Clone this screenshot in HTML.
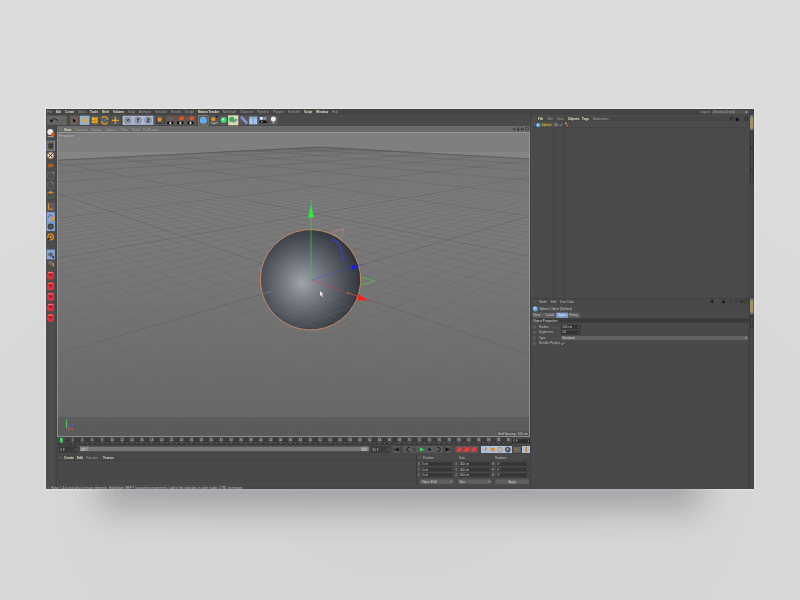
<!DOCTYPE html>
<html><head><meta charset="utf-8"><style>
html,body{margin:0;padding:0;width:800px;height:600px;overflow:hidden;background:#dcdcdc}
#bgv{position:absolute;left:0;top:0;width:800px;height:600px;background:radial-gradient(ellipse 640px 400px at 400px 500px,rgba(0,0,0,0.04) 0%,rgba(0,0,0,0.025) 60%,rgba(0,0,0,0) 100%)}
svg{position:absolute;left:0;top:0;will-change:transform}
text{font-family:"Liberation Sans",sans-serif}
#sh2{position:absolute;left:46px;top:109px;width:708px;height:380px;box-shadow:0 0 2px 1px rgba(255,255,255,0.35)}
#sh{position:absolute;left:105px;top:419px;width:590px;height:70px;background:#3b3b3b;box-shadow:0 14px 34px 6px rgba(40,44,56,0.30)}
</style></head><body>
<div id="bgv"></div><div id="sh2"></div><div id="sh"></div>
<svg width="800" height="600" viewBox="0 0 800 600">
<rect x="46" y="109" width="708" height="380" fill="#474747" />
<rect x="46" y="109" width="708" height="5.4" fill="#444444" />
<text x="47" y="113.4" font-size="3.5" fill="#a0a0a0" font-weight="normal" textLength="5.2" lengthAdjust="spacingAndGlyphs" stroke-width="0">File</text>
<text x="56" y="113.4" font-size="3.5" fill="#e4e3c6" font-weight="bold" textLength="5.2" lengthAdjust="spacingAndGlyphs" stroke-width="0">Edit</text>
<text x="65" y="113.4" font-size="3.5" fill="#e4e3c6" font-weight="bold" textLength="9.2" lengthAdjust="spacingAndGlyphs" stroke-width="0">Create</text>
<text x="78" y="113.4" font-size="3.5" fill="#a0a0a0" font-weight="normal" textLength="8.2" lengthAdjust="spacingAndGlyphs" stroke-width="0">Select</text>
<text x="90" y="113.4" font-size="3.5" fill="#e4e3c6" font-weight="bold" textLength="8.2" lengthAdjust="spacingAndGlyphs" stroke-width="0">Tools</text>
<text x="102" y="113.4" font-size="3.5" fill="#e4e3c6" font-weight="bold" textLength="7.2" lengthAdjust="spacingAndGlyphs" stroke-width="0">Mesh</text>
<text x="113" y="113.4" font-size="3.5" fill="#e4e3c6" font-weight="bold" textLength="11.2" lengthAdjust="spacingAndGlyphs" stroke-width="0">Volume</text>
<text x="128" y="113.4" font-size="3.5" fill="#a0a0a0" font-weight="normal" textLength="7.2" lengthAdjust="spacingAndGlyphs" stroke-width="0">Snap</text>
<text x="139" y="113.4" font-size="3.5" fill="#a0a0a0" font-weight="normal" textLength="12.2" lengthAdjust="spacingAndGlyphs" stroke-width="0">Animate</text>
<text x="155" y="113.4" font-size="3.5" fill="#a0a0a0" font-weight="normal" textLength="12.2" lengthAdjust="spacingAndGlyphs" stroke-width="0">Simulate</text>
<text x="171" y="113.4" font-size="3.5" fill="#a0a0a0" font-weight="normal" textLength="10.2" lengthAdjust="spacingAndGlyphs" stroke-width="0">Render</text>
<text x="185" y="113.4" font-size="3.5" fill="#a0a0a0" font-weight="normal" textLength="9.2" lengthAdjust="spacingAndGlyphs" stroke-width="0">Sculpt</text>
<text x="198" y="113.4" font-size="3.5" fill="#e4e3c6" font-weight="bold" textLength="21.2" lengthAdjust="spacingAndGlyphs" stroke-width="0">Motion Tracker</text>
<text x="223" y="113.4" font-size="3.5" fill="#a0a0a0" font-weight="normal" textLength="13.2" lengthAdjust="spacingAndGlyphs" stroke-width="0">MoGraph</text>
<text x="240" y="113.4" font-size="3.5" fill="#a0a0a0" font-weight="normal" textLength="13.2" lengthAdjust="spacingAndGlyphs" stroke-width="0">Character</text>
<text x="257" y="113.4" font-size="3.5" fill="#a0a0a0" font-weight="normal" textLength="12.2" lengthAdjust="spacingAndGlyphs" stroke-width="0">Pipeline</text>
<text x="273" y="113.4" font-size="3.5" fill="#a0a0a0" font-weight="normal" textLength="11.2" lengthAdjust="spacingAndGlyphs" stroke-width="0">Plugins</text>
<text x="288" y="113.4" font-size="3.5" fill="#a0a0a0" font-weight="normal" textLength="12.2" lengthAdjust="spacingAndGlyphs" stroke-width="0">Redshift</text>
<text x="304" y="113.4" font-size="3.5" fill="#e4e3c6" font-weight="bold" textLength="8.2" lengthAdjust="spacingAndGlyphs" stroke-width="0">Script</text>
<text x="316" y="113.4" font-size="3.5" fill="#e4e3c6" font-weight="bold" textLength="12.2" lengthAdjust="spacingAndGlyphs" stroke-width="0">Window</text>
<text x="332" y="113.4" font-size="3.5" fill="#a0a0a0" font-weight="normal" textLength="6.0" lengthAdjust="spacingAndGlyphs" stroke-width="0">Help</text>
<text x="700" y="113.4" font-size="3.2" fill="#a8a8a8" font-weight="normal" >Layout:</text>
<rect x="712" y="110.4" width="37" height="3.8" fill="#545454" />
<text x="713" y="113.4" font-size="3.2" fill="#a0a0a0" font-weight="normal" >[Startup (User)]</text>
<path d="M745 111.6h2.4l-1.2 1.3z" fill="#ddd" stroke="none" stroke-width="0.6" />
<rect x="46" y="114.5" width="484" height="11.5" fill="#4a4a4a" />
<rect x="47" y="115.7" width="19.6" height="9.2" fill="#666666" />
<path d="M49.8 122.2l1.2-3.2l2.2 2.2z" fill="#0a0a0a" stroke="none" stroke-width="0.6" />
<path d="M51.8 120.3q2.6-3.2 5.2-0.6q0.6 0.8 0 1.6" fill="none" stroke="#101010" stroke-width="0.75" />
<path d="M59.5 121.2q2.2-2.8 4.6-0.8" fill="none" stroke="#5c5c5c" stroke-width="0.6" />
<path d="M63.6 119.2l1.2 2.4l-2.2 0.2z" fill="#5c5c5c" stroke="none" stroke-width="0.6" />
<rect x="70" y="115.7" width="8.6" height="9.2" fill="#5e5e5e" />
<circle cx="74.3" cy="120.3" r="3.0" fill="none" stroke="#b0513a" stroke-width="1.1" stroke-dasharray="1.3 0.5"/>
<path d="M73.2 118.6l2.8 2.5h-1.2l0.7 1.2l-0.7 0.3l-0.7-1.2l-0.9 0.9z" fill="#0a0a0a" stroke="none" stroke-width="0.6" />
<rect x="79.7" y="115.7" width="9.8" height="9.2" fill="#8db1e4" />
<path d="M84.6 116.9v6.8M81.2 120.3h6.8" fill="none" stroke="#e3a31e" stroke-width="1.1" />
<path d="M84.6 116.5l-1.3 1.6h2.6zM84.6 124.1l-1.3-1.6h2.6zM80.8 120.3l1.6-1.3v2.6zM88.4 120.3l-1.6-1.3v2.6z" fill="#e3a31e" stroke="none" stroke-width="0.6" />
<circle cx="84.6" cy="120.3" r="1.1" fill="#eaa621" stroke="none" stroke-width="0.6" />
<rect x="90.5" y="115.7" width="8.4" height="9.2" fill="#5a5a5a" />
<rect x="91.9" y="117.3" width="5.8" height="6" fill="#eba51c" />
<path d="M91.9 120.3h5.8M94.8 117.3v6" fill="none" stroke="#9a6410" stroke-width="0.45" />
<rect x="92.6" y="118" width="1.6" height="1.6" fill="#f7c860" />
<rect x="100" y="115.7" width="9.5" height="9.2" fill="#5a5a5a" />
<path d="M102 118.2a3 3 0 0 1 5.4 0.4M107.5 122.3a3 3 0 0 1 -5.6 0" fill="none" stroke="#e3a01c" stroke-width="1.2" />
<path d="M107.8 117.5l0.3 2.4l-2-0.9z M101.6 123.1l-0.3-2.4l2 0.9z" fill="#e3a01c" stroke="none" stroke-width="0.6" />
<circle cx="104.7" cy="120.3" r="1.0" fill="#5077b8" stroke="none" stroke-width="0.6" />
<rect x="110.6" y="115.7" width="9.5" height="9.2" fill="#565656" />
<path d="M115.3 116.8v7M111.8 120.3h7" fill="none" stroke="#eba51c" stroke-width="1.2" />
<rect x="122.6" y="115.7" width="30.8" height="9.2" fill="#a4bbdb" />
<circle cx="127.8" cy="120.3" r="3.4" fill="#8fa1c0" stroke="#a9806e" stroke-width="0.9" />
<path d="M126.39999999999999 118.9l2.8 2.8M129.2 118.9l-2.8 2.8" fill="none" stroke="#1a2030" stroke-width="0.9" />
<circle cx="138.0" cy="120.3" r="3.4" fill="#8fa1c0" stroke="#a9806e" stroke-width="0.9" />
<path d="M136.4 118.6h3.2l-1.6 2.2z" fill="#25314a" stroke="none" stroke-width="0.6" />
<path d="M138.0 120.4v1.8" fill="none" stroke="#1b2130" stroke-width="0.9" />
<circle cx="148.2" cy="120.3" r="3.4" fill="#8fa1c0" stroke="#a9806e" stroke-width="0.9" />
<path d="M146.89999999999998 118.9h2.6l-2.6 2.8h2.6" fill="none" stroke="#0d0d0d" stroke-width="0.8" />
<rect x="154" y="115.7" width="8.8" height="9.2" fill="#5a5a5a" />
<path d="M156.2 117.2v6.2h5.6" fill="none" stroke="#2a2a2a" stroke-width="0.8" />
<circle cx="159.6" cy="119.4" r="2.0" fill="#f29022" stroke="none" stroke-width="0.6" />
<path d="M158.5 123.4l1.2-1.2" fill="none" stroke="#333" stroke-width="0.5" />
<rect x="165.4" y="115.7" width="30.4" height="9.2" fill="#5a5a5a" />
<rect x="166.9" y="116.3" width="7.4" height="5.2" fill="#5e5e5e" stroke="#7a4638" stroke-width="0.7"/>
<circle cx="168.4" cy="122.9" r="1.3" fill="#050505" stroke="none" stroke-width="0.6" />
<circle cx="172.2" cy="122.9" r="1.3" fill="#050505" stroke="none" stroke-width="0.6" />
<circle cx="170.29999999999998" cy="122.9" r="1.0" fill="#f0f0f0" stroke="none" stroke-width="0.6" />
<rect x="177.0" y="116.3" width="7.4" height="5.2" fill="#5e5e5e" stroke="#7a4638" stroke-width="0.7"/>
<rect x="179.89999999999998" y="116.6" width="3.6" height="3.2" fill="#e8582a" />
<circle cx="178.5" cy="122.9" r="1.3" fill="#050505" stroke="none" stroke-width="0.6" />
<circle cx="182.29999999999998" cy="122.9" r="1.3" fill="#050505" stroke="none" stroke-width="0.6" />
<circle cx="180.39999999999998" cy="122.9" r="1.0" fill="#f0f0f0" stroke="none" stroke-width="0.6" />
<rect x="187.1" y="116.3" width="7.4" height="5.2" fill="#5e5e5e" stroke="#7a4638" stroke-width="0.7"/>
<rect x="189.99999999999997" y="116.6" width="3.6" height="3.2" fill="#e8582a" />
<circle cx="188.6" cy="122.9" r="1.3" fill="#050505" stroke="none" stroke-width="0.6" />
<circle cx="192.39999999999998" cy="122.9" r="1.3" fill="#050505" stroke="none" stroke-width="0.6" />
<circle cx="190.49999999999997" cy="122.9" r="1.0" fill="#f0f0f0" stroke="none" stroke-width="0.6" />
<rect x="198" y="115.2" width="10.6" height="10.2" fill="#8f8d6e" rx="1"/>
<rect x="198.7" y="115.9" width="9.2" height="8.8" fill="#5a5a5a" />
<path d="M200 118l3.3-1.5l3.4 1.5v4.6l-3.4 1.5l-3.3-1.5z" fill="#65b2f2" stroke="none" stroke-width="0.6" />
<path d="M200 118l3.3 1.5l3.4-1.5M203.3 119.5v4.6" fill="none" stroke="#3f86c6" stroke-width="0.4" />
<rect x="209.6" y="115.7" width="9.6" height="9.2" fill="#585858" />
<circle cx="213.3" cy="119.2" r="2.0" fill="#f0901f" stroke="none" stroke-width="0.6" />
<path d="M211 122.8q2.6 1.6 6.4-0.2" fill="none" stroke="#e8e8e8" stroke-width="0.6" />
<path d="M215.5 116.2h2.4l-1.2 1.9z" fill="#0a0a0a" stroke="none" stroke-width="0.6" />
<path d="M213.3 121.2v1.8" fill="none" stroke="#8a6a4a" stroke-width="0.5" />
<rect x="219.6" y="115.7" width="9.2" height="9.2" fill="#595959" />
<circle cx="223.6" cy="120.1" r="3.0" fill="#45dc78" stroke="#1c6e38" stroke-width="0.5" stroke-dasharray="0.6 0.4"/>
<circle cx="222.8" cy="119.3" r="1.0" fill="#b9f5cc" stroke="none" stroke-width="0.6" />
<rect x="228.2" y="115.3" width="10.2" height="10" fill="#dcd8b4" />
<circle cx="231.8" cy="119.4" r="2.6" fill="#2fb35a" stroke="none" stroke-width="0.6" />
<path d="M233.8 121.6l2.6-1.8" fill="none" stroke="#8a8a8a" stroke-width="2.2" stroke-linecap="round"/>
<rect x="239.4" y="115.7" width="8.8" height="9.2" fill="#585858" />
<path d="M241.8 117.6l4.6 5" fill="none" stroke="#7f8ad8" stroke-width="2.8" stroke-linecap="round"/>
<path d="M241.8 117.6l4.6 5" fill="none" stroke="#aab2ee" stroke-width="0.6" />
<rect x="248.2" y="115.7" width="9.8" height="9.2" fill="#585858" />
<rect x="249.2" y="116.7" width="8" height="7.6" fill="#a7c4ea" />
<path d="M253.2 116.7v7.6M249.2 118h8" fill="none" stroke="#5777a0" stroke-width="0.5" />
<rect x="258.2" y="115.7" width="9.8" height="9.2" fill="#585858" />
<rect x="259.8" y="117" width="3" height="2.8" fill="#dce8f5" />
<rect x="263.4" y="117" width="3" height="2.8" fill="#7a96c2" />
<rect x="259.8" y="120.5" width="6.2" height="2.6" fill="#121212" />
<rect x="266.2" y="121.4" width="1.3" height="1.3" fill="#0a0a0a" />
<rect x="261.2" y="121.1" width="1.2" height="1.2" fill="#d0d0d0" />
<rect x="268.8" y="115.7" width="9.4" height="9.2" fill="#5a5a5a" />
<circle cx="273.4" cy="119.1" r="2.5" fill="#ececec" stroke="none" stroke-width="0.6" />
<rect x="272.6" y="121.2" width="1.6" height="2.2" fill="#b5b5b5" />
<rect x="46" y="126" width="9.5" height="360" fill="#4c4c4c" />
<rect x="55.5" y="126" width="1.5" height="360" fill="#444444" />
<circle cx="50.3" cy="132" r="3" fill="#e8e8e8" stroke="none" stroke-width="0.6" />
<circle cx="52.8" cy="134.6" r="1.9" fill="#e0521f" stroke="none" stroke-width="0.6" />
<path d="M47.5 136.6h6" fill="none" stroke="#ddd" stroke-width="0.6" />
<rect x="46.5" y="140.8" width="8.5" height="10" fill="#7391c2" />
<rect x="47.1" y="141.4" width="7.3" height="8.8" fill="#8aa6d6" />
<rect x="47.3" y="141.6" width="7" height="8.6" fill="#5a5a5a" />
<path d="M47.8 143.6l3-1.3l3 1.3v4.6l-3 1.3l-3-1.3z" fill="#3e3e3e" stroke="#b0703f" stroke-width="0.7" />
<circle cx="50.6" cy="155.4" r="3.2" fill="#e9d2bd" stroke="none" stroke-width="0.6" />
<path d="M48.4 153.2l4.4 4.4M52.8 153.2l-4.4 4.4" fill="none" stroke="#333" stroke-width="1.0" />
<circle cx="50.6" cy="155.4" r="3.2" fill="none" stroke="#c0703b" stroke-width="0.6" />
<path d="M46.8 165.5q3.8-4 7.6 0q-3.8 4-7.6 0z" fill="#b0621e" stroke="none" stroke-width="0.6" />
<path d="M47.5 165.5h6.2" fill="none" stroke="#8a4a12" stroke-width="0.4" />
<path d="M47.6 173.5l3-1.4l3 1.4v4.4l-3 1.4l-3-1.4z" fill="#4a4a4a" stroke="#7c7c7c" stroke-width="0.5" />
<path d="M47.6 173.5l3 1.4l3-1.4M50.6 174.9v4.4" fill="none" stroke="#6a6a6a" stroke-width="0.4" />
<rect x="52.8" y="172.0" width="1.4" height="1.4" fill="#f08e1a" />
<path d="M47.6 183l3-1.4l3 1.4v4.4l-3 1.4l-3-1.4z" fill="#4a4a4a" stroke="#7c7c7c" stroke-width="0.5" />
<path d="M47.6 183l3 1.4l3-1.4M50.6 184.4v4.4" fill="none" stroke="#6a6a6a" stroke-width="0.4" />
<path d="M50.6 181.7l2.8 1.3" fill="none" stroke="#f08e1a" stroke-width="0.6" />
<path d="M47.6 192.5l3-1.4l3 1.4v4.4l-3 1.4l-3-1.4z" fill="#4a4a4a" stroke="#7c7c7c" stroke-width="0.5" />
<path d="M47.6 192.5l3 1.4l3-1.4M50.6 193.9v4.4" fill="none" stroke="#6a6a6a" stroke-width="0.4" />
<path d="M47.8 192.5l2.8-1.3l2.8 1.3l-2.8 1.3z" fill="#f08e1a" stroke="none" stroke-width="0.6" />
<rect x="46.8" y="202.3" width="8" height="8.6" fill="#5c5c5c" />
<path d="M48.6 203.2v6h4.6" fill="none" stroke="#e08a2a" stroke-width="1.1" />
<rect x="46.5" y="212.0" width="8.5" height="10" fill="#7391c2" />
<rect x="47.1" y="212.6" width="7.3" height="8.8" fill="#8aa6d6" />
<path d="M47.8 218l2.5-3.5l2 2.4" fill="none" stroke="#3a3a3a" stroke-width="0.6" />
<rect x="51.3" y="216.8" width="3" height="4.2" fill="#f08e1a" />
<rect x="46.5" y="222" width="8.5" height="9" fill="#7d9ccc" />
<circle cx="50.7" cy="226.5" r="3.0" fill="#3a3a3a" stroke="none" stroke-width="0.6" />
<circle cx="50.7" cy="226.5" r="1.6" fill="#777" stroke="none" stroke-width="0.6" />
<circle cx="50.7" cy="226.5" r="0.7" fill="#222" stroke="none" stroke-width="0.6" />
<circle cx="50.6" cy="237" r="2.8" fill="none" stroke="#e8891c" stroke-width="1.3" />
<circle cx="50.6" cy="237" r="1.0" fill="#f2b060" stroke="none" stroke-width="0.6" />
<circle cx="48.6" cy="239" r="1.1" fill="#222" stroke="none" stroke-width="0.6" />
<rect x="46.5" y="249.5" width="8.5" height="10" fill="#7391c2" />
<rect x="47.1" y="250.1" width="7.3" height="8.8" fill="#8aa6d6" />
<path d="M47.4 254.5l3.2-2.4l3.2 2.4l-3.2 2.4z" fill="#5e6470" stroke="none" stroke-width="0.6" />
<rect x="52.3" y="256.2" width="1.6" height="2" fill="#1e1e1e" />
<path d="M47.4 262.8l3.2-2.4l3.2 2.4l-3.2 2.4z" fill="#6e6e6e" stroke="none" stroke-width="0.6" />
<rect x="52.5" y="263.2" width="1.5" height="3.3" fill="#e8891c" />
<path d="M47.2 274q0-2.6 3.4-2.6q3.4 0 3.4 2.6v3.2q0 2.4-3.4 2.4q-3.4 0-3.4-2.4z" fill="#e0303a" stroke="none" stroke-width="0.6" />
<path d="M48.6 274.2h4l-2 2.6z" fill="#8c1a1e" stroke="none" stroke-width="0.6" />
<rect x="48" y="272.2" width="5.2" height="0.8" fill="#f07a80" />
<rect x="47.6" y="278.2" width="6" height="0.7" fill="#c04048" />
<path d="M47.2 284.6q0-2.6 3.4-2.6q3.4 0 3.4 2.6v3.2q0 2.4-3.4 2.4q-3.4 0-3.4-2.4z" fill="#e0303a" stroke="none" stroke-width="0.6" />
<path d="M48.6 284.8h4l-2 2.6z" fill="#8c1a1e" stroke="none" stroke-width="0.6" />
<rect x="48" y="282.8" width="5.2" height="0.8" fill="#f07a80" />
<rect x="47.6" y="288.8" width="6" height="0.7" fill="#c04048" />
<path d="M47.2 295.2q0-2.6 3.4-2.6q3.4 0 3.4 2.6v3.2q0 2.4-3.4 2.4q-3.4 0-3.4-2.4z" fill="#e0303a" stroke="none" stroke-width="0.6" />
<path d="M48.6 295.4h4l-2 2.6z" fill="#8c1a1e" stroke="none" stroke-width="0.6" />
<rect x="48" y="293.4" width="5.2" height="0.8" fill="#f07a80" />
<rect x="47.6" y="299.4" width="6" height="0.7" fill="#c04048" />
<path d="M47.2 305.8q0-2.6 3.4-2.6q3.4 0 3.4 2.6v3.2q0 2.4-3.4 2.4q-3.4 0-3.4-2.4z" fill="#e0303a" stroke="none" stroke-width="0.6" />
<path d="M48.6 306.0h4l-2 2.6z" fill="#8c1a1e" stroke="none" stroke-width="0.6" />
<rect x="48" y="304.0" width="5.2" height="0.8" fill="#f07a80" />
<rect x="47.6" y="310.0" width="6" height="0.7" fill="#c04048" />
<path d="M47.2 316.4q0-2.6 3.4-2.6q3.4 0 3.4 2.6v3.2q0 2.4-3.4 2.4q-3.4 0-3.4-2.4z" fill="#e0303a" stroke="none" stroke-width="0.6" />
<path d="M48.6 316.59999999999997h4l-2 2.6z" fill="#8c1a1e" stroke="none" stroke-width="0.6" />
<rect x="48" y="314.59999999999997" width="5.2" height="0.8" fill="#f07a80" />
<rect x="47.6" y="320.59999999999997" width="6" height="0.7" fill="#c04048" />
<rect x="57" y="126" width="473" height="6" fill="#6b6b6b" />
<path d="M59.3 127.8h2.4M59.3 128.9h2.4M59.3 130h2.4" fill="none" stroke="#8c8c8c" stroke-width="0.4" />
<text x="64" y="130.6" font-size="3.2" fill="#e4e3c6" font-weight="bold" >View</text>
<text x="75" y="130.6" font-size="3.2" fill="#a0a0a0" font-weight="normal" >Cameras</text>
<text x="91" y="130.6" font-size="3.2" fill="#a0a0a0" font-weight="normal" >Display</text>
<text x="105" y="130.6" font-size="3.2" fill="#a0a0a0" font-weight="normal" >Options</text>
<text x="121" y="130.6" font-size="3.2" fill="#a0a0a0" font-weight="normal" >Filter</text>
<text x="132" y="130.6" font-size="3.2" fill="#a0a0a0" font-weight="normal" >Panel</text>
<text x="143" y="130.6" font-size="3.2" fill="#a0a0a0" font-weight="normal" >ProRender</text>
<path d="M513 129.2l1.3-1.3l1.3 1.3l-1.3 1.3z" fill="none" stroke="#111" stroke-width="0.5" />
<path d="M518.3 127.4v2.2M517.2 130.1h2.2" fill="none" stroke="#111" stroke-width="0.9" />
<circle cx="522.3" cy="129.1" r="1.3" fill="none" stroke="#111" stroke-width="0.5" />
<rect x="525.8" y="127.7" width="2.4" height="2.4" fill="none" stroke="#222" stroke-width="0.5"/>
<svg x="57" y="132" width="473" height="305" viewBox="0 0 473 305">
<defs>
<radialGradient id="sg" gradientUnits="userSpaceOnUse" cx="247" cy="151" r="64" fx="245" fy="151">
<stop offset="0" stop-color="#a0a4aa"/><stop offset="0.25" stop-color="#7c8088"/><stop offset="0.55" stop-color="#575b63"/><stop offset="0.8" stop-color="#3b3f46"/><stop offset="1" stop-color="#23262b"/>
</radialGradient>
<clipPath id="sc"><polygon points="303.64,150.31 302.44,158.98 299.76,167.31 295.67,175.04 290.29,181.95 283.81,187.82 276.40,192.47 268.29,195.77 259.74,197.61 250.99,197.94 242.32,196.74 233.99,194.06 226.26,189.97 219.35,184.59 213.48,178.11 208.83,170.70 205.53,162.59 203.69,154.04 203.36,145.29 204.56,136.62 207.24,128.29 211.33,120.56 216.71,113.65 223.19,107.78 230.60,103.13 238.71,99.83 247.26,97.99 256.01,97.66 264.68,98.86 273.01,101.54 280.74,105.63 287.65,111.01 293.52,117.49 298.17,124.90 301.47,133.01 303.31,141.56"/></clipPath>
<clipPath id="ug"><polygon points="202.74,149.19 202.88,150.26 203.24,151.33 203.82,152.40 204.64,153.46 205.68,154.52 206.95,155.55 208.45,156.57 210.16,157.56 212.10,158.52 214.25,159.43 216.60,160.31 219.14,161.14 221.87,161.91 224.77,162.63 227.83,163.28 231.03,163.87 234.35,164.38 237.79,164.82 241.31,165.18 244.90,165.46 248.55,165.66 252.22,165.77 255.91,165.80 259.58,165.75 263.22,165.61 266.80,165.39 270.32,165.08 273.73,164.70 277.04,164.24 280.22,163.70 283.25,163.09 286.12,162.42 288.81,161.69 291.32,160.90 291.32,160.90 293.63,160.06 295.73,159.17 297.61,158.24 299.28,157.27 300.72,156.27 301.93,155.25 302.91,154.21 303.66,153.15 304.18,152.08 304.48,151.01 304.54,149.94 304.54,260 202.74,260"/></clipPath>
</defs>
<linearGradient id="gg" gradientUnits="userSpaceOnUse" x1="0" y1="20" x2="0" y2="300"><stop offset="0" stop-color="#818181"/><stop offset="0.5" stop-color="#757575"/><stop offset="1" stop-color="#666666"/></linearGradient>
<linearGradient id="lm" gradientUnits="userSpaceOnUse" x1="0" y1="15" x2="0" y2="300"><stop offset="0" stop-color="#666"/><stop offset="0.16" stop-color="#fff"/><stop offset="0.45" stop-color="#fff"/><stop offset="1" stop-color="#444"/></linearGradient>
<mask id="lmask" maskUnits="userSpaceOnUse" x="0" y="0" width="473" height="305"><rect width="473" height="305" fill="url(#lm)"/></mask>
<linearGradient id="lj" gradientUnits="userSpaceOnUse" x1="0" y1="15" x2="0" y2="300"><stop offset="0" stop-color="#ccc"/><stop offset="0.3" stop-color="#fff"/><stop offset="0.45" stop-color="#fff"/><stop offset="1" stop-color="#555"/></linearGradient>
<mask id="jmask" maskUnits="userSpaceOnUse" x="0" y="0" width="473" height="305"><rect width="473" height="305" fill="url(#lj)"/></mask>
<rect width="473" height="305" fill="#858585"/>
<polygon points="-1708.49,113.33 262.76,15.19 3722.01,209.23 3722.01,400 -1708.49,400" fill="url(#gg)"/>
<g mask="url(#lmask)"><path d="M-5.00 29.00L265.77 15.36M-5.00 29.49L268.82 15.53M-5.00 30.00L271.91 15.70M-5.00 30.52L275.04 15.88M-5.00 31.05L278.21 16.06M-5.00 31.59L281.42 16.24M-5.00 32.15L284.67 16.42M-5.00 32.72L287.97 16.60M-5.00 33.31L291.31 16.79M-5.00 34.53L298.12 17.17M-5.00 35.16L301.60 17.37M-5.00 35.82L305.12 17.57M-5.00 36.49L308.69 17.77M-5.00 37.18L312.31 17.97M-5.00 37.90L315.98 18.18M-5.00 38.63L319.71 18.38M-5.00 39.39L323.49 18.60M-5.00 40.16L327.32 18.81M-5.00 41.80L335.14 19.25M-5.00 42.65L339.14 19.47M-5.00 43.53L343.20 19.70M-5.00 44.45L347.32 19.93M-5.00 45.39L351.50 20.17M-5.00 46.36L355.74 20.41M-5.00 47.37L360.04 20.65M-5.00 48.42L364.41 20.89M-5.00 49.50L368.85 21.14M-5.00 51.79L377.94 21.65M-5.00 53.00L382.59 21.91M-5.00 54.25L387.31 22.18M-5.00 55.56L392.11 22.45M-5.00 56.92L396.98 22.72M-5.00 58.33L401.94 23.00M-5.00 59.81L406.97 23.28M-5.00 61.34L412.09 23.57M-5.00 62.95L417.30 23.86M-5.00 66.38L427.97 24.46M-5.00 68.22L433.44 24.76M-5.00 70.15L439.01 25.08M-5.00 72.17L444.67 25.39M-5.00 74.30L450.43 25.72M-5.00 76.53L456.30 26.05M-5.00 78.89L462.26 26.38M-5.00 81.38L468.34 26.72M-5.00 84.00L474.52 27.07M-5.00 89.72L478.00 28.94M-5.00 92.85L478.00 30.19M-5.00 96.18L478.00 31.52M-5.00 99.72L478.00 32.94M-5.00 103.51L478.00 34.46M-5.00 107.56L478.00 36.08M-5.00 111.91L478.00 37.81M-5.00 116.59L478.00 39.69M-5.00 121.64L478.00 41.70M-5.00 133.02L478.00 46.26M-5.00 194.42L112.21 310.00M-5.00 139.48L478.00 48.84M-5.00 158.69L180.65 310.00M-5.00 146.54L478.00 51.66M-5.00 133.53L249.08 310.00M-5.00 154.30L478.00 54.76M-5.00 114.85L317.52 310.00M-5.00 162.85L478.00 58.18M-5.00 100.43L385.95 310.00M-5.00 172.34L478.00 61.97M-5.00 88.96L454.38 310.00M-5.00 182.91L478.00 66.20M-5.00 79.62L478.00 290.44M-5.00 194.78L478.00 70.95M-5.00 71.87L478.00 264.77M-5.00 208.19L478.00 76.31M-5.00 65.34L478.00 243.12M-5.00 241.01L478.00 89.43M-5.00 54.92L478.00 208.63M-5.00 261.40L478.00 97.58M-5.00 50.71L478.00 194.66M-5.00 285.37L478.00 107.17M-5.00 46.99L478.00 182.36M4.76 310.00L478.00 118.59M-5.00 43.70L478.00 171.45M81.29 310.00L478.00 132.46M-5.00 40.76L478.00 161.69M157.83 310.00L478.00 149.63M-5.00 38.11L478.00 152.93M234.36 310.00L478.00 171.44M-5.00 35.72L478.00 145.01M310.89 310.00L478.00 200.09M-5.00 33.55L478.00 137.82M387.42 310.00L478.00 239.37M-5.00 31.57L478.00 131.26M-3.17 28.43L478.00 119.72M3.51 28.10L478.00 114.63M10.08 27.77L478.00 109.91M16.55 27.45L478.00 105.54M22.91 27.13L478.00 101.47M29.17 26.82L478.00 97.67M35.33 26.51L478.00 94.12M41.39 26.21L478.00 90.80M47.35 25.92L478.00 87.67M59.00 25.34L478.00 81.96M64.70 25.05L478.00 79.35M70.30 24.77L478.00 76.88M75.82 24.50L478.00 74.54M81.26 24.23L478.00 72.32M86.62 23.96L478.00 70.21M91.89 23.70L478.00 68.20M97.09 23.44L478.00 66.29M102.22 23.18L478.00 64.47M112.24 22.68L478.00 61.08M117.15 22.44L478.00 59.49M121.99 22.20L478.00 57.97M126.75 21.96L478.00 56.51M131.46 21.73L478.00 55.12M136.09 21.50L478.00 53.78M140.67 21.27L478.00 52.49M145.18 21.04L478.00 51.25M149.62 20.82L478.00 50.06M158.34 20.39L478.00 47.81M162.61 20.18L478.00 46.75M166.83 19.97L478.00 45.72M170.99 19.76L478.00 44.73M175.10 19.56L478.00 43.77M179.15 19.35L478.00 42.85M183.15 19.15L478.00 41.95M187.10 18.96L478.00 41.09M191.00 18.76L478.00 40.25M198.65 18.38L478.00 38.65M202.40 18.20L478.00 37.89M206.11 18.01L478.00 37.15M209.77 17.83L478.00 36.43M213.39 17.65L478.00 35.73M216.96 17.47L478.00 35.05M220.49 17.30L478.00 34.39M223.98 17.12L478.00 33.75M227.42 16.95L478.00 33.13M234.19 16.61L478.00 31.94M237.51 16.45L478.00 31.36M240.80 16.28L478.00 30.80M244.05 16.12L478.00 30.26M247.25 15.96L478.00 29.73M250.43 15.80L478.00 29.21M253.56 15.65L478.00 28.71M256.67 15.49L478.00 28.21M259.73 15.34L478.00 27.73" stroke="#666" stroke-width="0.35" fill="none" opacity="0.75"/></g>
<g mask="url(#jmask)"><path d="M-5.00 28.52L262.76 15.19M-5.00 33.91L294.69 16.98M-5.00 40.97L331.20 19.03M-5.00 50.62L373.36 21.39M-5.00 64.63L422.59 24.16M-5.00 86.78L478.00 27.77M-5.00 127.10L478.00 43.89M-5.00 249.12L43.78 310.00M-5.00 223.46L478.00 82.41M-5.00 59.75L478.00 224.62M463.95 310.00L478.00 296.55M-5.00 29.75L478.00 125.25M53.22 25.62L478.00 84.73M107.27 22.93L478.00 62.73M154.01 20.60L478.00 48.92M194.85 18.57L478.00 39.44M230.82 16.78L478.00 32.52M262.76 15.19L478.00 27.26" stroke="#555" stroke-width="0.55" fill="none" opacity="0.75"/></g>
<polyline points="-1708.49,113.33 262.76,15.19 3722.01,209.23" fill="none" stroke="#5e5e5e" stroke-width="0.9"/>
<rect y="0" width="473" height="20" fill="rgba(0,0,0,0.04)"/>
<rect y="285" width="473" height="20" fill="rgba(0,0,0,0.1)"/>
<polygon points="303.64,150.31 302.44,158.98 299.76,167.31 295.67,175.04 290.29,181.95 283.81,187.82 276.40,192.47 268.29,195.77 259.74,197.61 250.99,197.94 242.32,196.74 233.99,194.06 226.26,189.97 219.35,184.59 213.48,178.11 208.83,170.70 205.53,162.59 203.69,154.04 203.36,145.29 204.56,136.62 207.24,128.29 211.33,120.56 216.71,113.65 223.19,107.78 230.60,103.13 238.71,99.83 247.26,97.99 256.01,97.66 264.68,98.86 273.01,101.54 280.74,105.63 287.65,111.01 293.52,117.49 298.17,124.90 301.47,133.01 303.31,141.56" fill="url(#sg)"/>
<g clip-path="url(#sc)"><g clip-path="url(#ug)">
<path d="M-5.00 29.00L265.77 15.36M-5.00 29.49L268.82 15.53M-5.00 30.00L271.91 15.70M-5.00 30.52L275.04 15.88M-5.00 31.05L278.21 16.06M-5.00 31.59L281.42 16.24M-5.00 32.15L284.67 16.42M-5.00 32.72L287.97 16.60M-5.00 33.31L291.31 16.79M-5.00 34.53L298.12 17.17M-5.00 35.16L301.60 17.37M-5.00 35.82L305.12 17.57M-5.00 36.49L308.69 17.77M-5.00 37.18L312.31 17.97M-5.00 37.90L315.98 18.18M-5.00 38.63L319.71 18.38M-5.00 39.39L323.49 18.60M-5.00 40.16L327.32 18.81M-5.00 41.80L335.14 19.25M-5.00 42.65L339.14 19.47M-5.00 43.53L343.20 19.70M-5.00 44.45L347.32 19.93M-5.00 45.39L351.50 20.17M-5.00 46.36L355.74 20.41M-5.00 47.37L360.04 20.65M-5.00 48.42L364.41 20.89M-5.00 49.50L368.85 21.14M-5.00 51.79L377.94 21.65M-5.00 53.00L382.59 21.91M-5.00 54.25L387.31 22.18M-5.00 55.56L392.11 22.45M-5.00 56.92L396.98 22.72M-5.00 58.33L401.94 23.00M-5.00 59.81L406.97 23.28M-5.00 61.34L412.09 23.57M-5.00 62.95L417.30 23.86M-5.00 66.38L427.97 24.46M-5.00 68.22L433.44 24.76M-5.00 70.15L439.01 25.08M-5.00 72.17L444.67 25.39M-5.00 74.30L450.43 25.72M-5.00 76.53L456.30 26.05M-5.00 78.89L462.26 26.38M-5.00 81.38L468.34 26.72M-5.00 84.00L474.52 27.07M-5.00 89.72L478.00 28.94M-5.00 92.85L478.00 30.19M-5.00 96.18L478.00 31.52M-5.00 99.72L478.00 32.94M-5.00 103.51L478.00 34.46M-5.00 107.56L478.00 36.08M-5.00 111.91L478.00 37.81M-5.00 116.59L478.00 39.69M-5.00 121.64L478.00 41.70M-5.00 133.02L478.00 46.26M-5.00 194.42L112.21 310.00M-5.00 139.48L478.00 48.84M-5.00 158.69L180.65 310.00M-5.00 146.54L478.00 51.66M-5.00 133.53L249.08 310.00M-5.00 154.30L478.00 54.76M-5.00 114.85L317.52 310.00M-5.00 162.85L478.00 58.18M-5.00 100.43L385.95 310.00M-5.00 172.34L478.00 61.97M-5.00 88.96L454.38 310.00M-5.00 182.91L478.00 66.20M-5.00 79.62L478.00 290.44M-5.00 194.78L478.00 70.95M-5.00 71.87L478.00 264.77M-5.00 208.19L478.00 76.31M-5.00 65.34L478.00 243.12M-5.00 241.01L478.00 89.43M-5.00 54.92L478.00 208.63M-5.00 261.40L478.00 97.58M-5.00 50.71L478.00 194.66M-5.00 285.37L478.00 107.17M-5.00 46.99L478.00 182.36M4.76 310.00L478.00 118.59M-5.00 43.70L478.00 171.45M81.29 310.00L478.00 132.46M-5.00 40.76L478.00 161.69M157.83 310.00L478.00 149.63M-5.00 38.11L478.00 152.93M234.36 310.00L478.00 171.44M-5.00 35.72L478.00 145.01M310.89 310.00L478.00 200.09M-5.00 33.55L478.00 137.82M387.42 310.00L478.00 239.37M-5.00 31.57L478.00 131.26M-3.17 28.43L478.00 119.72M3.51 28.10L478.00 114.63M10.08 27.77L478.00 109.91M16.55 27.45L478.00 105.54M22.91 27.13L478.00 101.47M29.17 26.82L478.00 97.67M35.33 26.51L478.00 94.12M41.39 26.21L478.00 90.80M47.35 25.92L478.00 87.67M59.00 25.34L478.00 81.96M64.70 25.05L478.00 79.35M70.30 24.77L478.00 76.88M75.82 24.50L478.00 74.54M81.26 24.23L478.00 72.32M86.62 23.96L478.00 70.21M91.89 23.70L478.00 68.20M97.09 23.44L478.00 66.29M102.22 23.18L478.00 64.47M112.24 22.68L478.00 61.08M117.15 22.44L478.00 59.49M121.99 22.20L478.00 57.97M126.75 21.96L478.00 56.51M131.46 21.73L478.00 55.12M136.09 21.50L478.00 53.78M140.67 21.27L478.00 52.49M145.18 21.04L478.00 51.25M149.62 20.82L478.00 50.06M158.34 20.39L478.00 47.81M162.61 20.18L478.00 46.75M166.83 19.97L478.00 45.72M170.99 19.76L478.00 44.73M175.10 19.56L478.00 43.77M179.15 19.35L478.00 42.85M183.15 19.15L478.00 41.95M187.10 18.96L478.00 41.09M191.00 18.76L478.00 40.25M198.65 18.38L478.00 38.65M202.40 18.20L478.00 37.89M206.11 18.01L478.00 37.15M209.77 17.83L478.00 36.43M213.39 17.65L478.00 35.73M216.96 17.47L478.00 35.05M220.49 17.30L478.00 34.39M223.98 17.12L478.00 33.75M227.42 16.95L478.00 33.13M234.19 16.61L478.00 31.94M237.51 16.45L478.00 31.36M240.80 16.28L478.00 30.80M244.05 16.12L478.00 30.26M247.25 15.96L478.00 29.73M250.43 15.80L478.00 29.21M253.56 15.65L478.00 28.71M256.67 15.49L478.00 28.21M259.73 15.34L478.00 27.73" stroke="#8a8d92" stroke-width="0.35" fill="none" opacity="0.45"/>
<path d="M-5.00 28.52L262.76 15.19M-5.00 33.91L294.69 16.98M-5.00 40.97L331.20 19.03M-5.00 50.62L373.36 21.39M-5.00 64.63L422.59 24.16M-5.00 86.78L478.00 27.77M-5.00 127.10L478.00 43.89M-5.00 249.12L43.78 310.00M-5.00 223.46L478.00 82.41M-5.00 59.75L478.00 224.62M463.95 310.00L478.00 296.55M-5.00 29.75L478.00 125.25M53.22 25.62L478.00 84.73M107.27 22.93L478.00 62.73M154.01 20.60L478.00 48.92M194.85 18.57L478.00 39.44M230.82 16.78L478.00 32.52M262.76 15.19L478.00 27.26" stroke="#a0a3a8" stroke-width="0.55" fill="none" opacity="0.7"/>
</g></g>
<polygon points="303.64,150.31 302.44,158.98 299.76,167.31 295.67,175.04 290.29,181.95 283.81,187.82 276.40,192.47 268.29,195.77 259.74,197.61 250.99,197.94 242.32,196.74 233.99,194.06 226.26,189.97 219.35,184.59 213.48,178.11 208.83,170.70 205.53,162.59 203.69,154.04 203.36,145.29 204.56,136.62 207.24,128.29 211.33,120.56 216.71,113.65 223.19,107.78 230.60,103.13 238.71,99.83 247.26,97.99 256.01,97.66 264.68,98.86 273.01,101.54 280.74,105.63 287.65,111.01 293.52,117.49 298.17,124.90 301.47,133.01 303.31,141.56" fill="none" stroke="#c98e62" stroke-width="0.9"/>
<line x1="254" y1="148" x2="254" y2="68" stroke="#3fcf4a" stroke-width="0.7"/>
<polygon points="254,72.6 251,85.4 257,85.4" fill="#2ee83a"/>
<line x1="254" y1="148" x2="306" y2="132" stroke="#3a3aff" stroke-width="0.6" opacity="0.6"/>
<polygon points="302,133.3 294.8,133.8 295.2,138.3" fill="#1a1aff"/>
<line x1="254" y1="148" x2="316" y2="170" stroke="#ff3030" stroke-width="0.6" opacity="0.6"/>
<polygon points="310.5,168.3 301,162 300.8,168.6" fill="#ff1e1e"/>
<path d="M275 100l12-3.5l-2.5 11z" fill="none" stroke="#d98080" stroke-width="0.6" opacity="0.8"/>
<path d="M275 107.5q9.5 1.5 11.5 22" fill="none" stroke="#4040d8" stroke-width="2.6" opacity="0.5"/>
<path d="M305 145l13 4l-13 4" fill="none" stroke="#50c050" stroke-width="0.7"/>
<path d="M263 159v5l1.2-1.1l1 2l0.7-0.3l-1-2h1.7z" fill="#eee"/>
<circle cx="291" cy="161" r="0.8" fill="#ff7a20"/>
<g transform="translate(9.6,296.2)"><line x1="0" y1="0" x2="0" y2="-8.5" stroke="#3fc94a" stroke-width="1.1"/><rect x="5.3" y="-4.4" width="1.6" height="3" fill="#5a5ad0"/><rect x="1.2" y="-2" width="1.5" height="1.2" fill="#9a50c0"/><line x1="1" y1="0.9" x2="7" y2="0.9" stroke="#d05050" stroke-width="1.1"/></g>
<rect x="1" y="1" width="17.5" height="4.6" fill="rgba(0,0,0,0.08)"/>
<text x="1.8" y="4.6" font-size="3" fill="#c4c4c4">Perspective</text>
<rect x="440" y="299.3" width="32.5" height="4.6" fill="rgba(0,0,0,0.12)"/>
<text x="441" y="303.3" font-size="3" fill="#dcdcdc">Grid Spacing : 100 cm</text>
<rect x="0.4" y="0.4" width="472.2" height="304.2" fill="none" stroke="#9a9a9a" stroke-width="0.8"/>
</svg>
<rect x="57" y="437" width="473" height="8" fill="#484848" />
<rect x="57" y="443" width="455" height="2" fill="#3a3a3a" />
<rect x="62.3" y="443.2" width="0.6" height="0.8" fill="#9a9a9a" />
<rect x="64.96" y="437.6" width="5.2" height="4.8" fill="#3a3a3a" />
<rect x="67.26" y="443.2" width="0.6" height="0.8" fill="#9a9a9a" />
<rect x="72.21" y="443.2" width="0.6" height="0.8" fill="#9a9a9a" />
<text x="72.51" y="441.4" font-size="3.0" fill="#cfcfcf" font-weight="normal" text-anchor="middle">2</text>
<rect x="74.87" y="437.6" width="5.2" height="4.8" fill="#3a3a3a" />
<rect x="77.17" y="443.2" width="0.6" height="0.8" fill="#9a9a9a" />
<rect x="82.12" y="443.2" width="0.6" height="0.8" fill="#9a9a9a" />
<text x="82.42" y="441.4" font-size="3.0" fill="#cfcfcf" font-weight="normal" text-anchor="middle">4</text>
<rect x="84.78" y="437.6" width="5.2" height="4.8" fill="#3a3a3a" />
<rect x="87.08" y="443.2" width="0.6" height="0.8" fill="#9a9a9a" />
<rect x="92.03" y="443.2" width="0.6" height="0.8" fill="#9a9a9a" />
<text x="92.33" y="441.4" font-size="3.0" fill="#cfcfcf" font-weight="normal" text-anchor="middle">6</text>
<rect x="94.69" y="437.6" width="5.2" height="4.8" fill="#3a3a3a" />
<rect x="96.98" y="443.2" width="0.6" height="0.8" fill="#9a9a9a" />
<rect x="101.94" y="443.2" width="0.6" height="0.8" fill="#9a9a9a" />
<text x="102.24000000000001" y="441.4" font-size="3.0" fill="#cfcfcf" font-weight="normal" text-anchor="middle">8</text>
<rect x="104.59" y="437.6" width="5.2" height="4.8" fill="#3a3a3a" />
<rect x="106.89" y="443.2" width="0.6" height="0.8" fill="#9a9a9a" />
<rect x="111.85" y="443.2" width="0.6" height="0.8" fill="#9a9a9a" />
<text x="112.15" y="441.4" font-size="3.0" fill="#cfcfcf" font-weight="normal" text-anchor="middle">10</text>
<rect x="114.51" y="437.6" width="5.2" height="4.8" fill="#3a3a3a" />
<rect x="116.81" y="443.2" width="0.6" height="0.8" fill="#9a9a9a" />
<rect x="121.76" y="443.2" width="0.6" height="0.8" fill="#9a9a9a" />
<text x="122.06" y="441.4" font-size="3.0" fill="#cfcfcf" font-weight="normal" text-anchor="middle">12</text>
<rect x="124.42" y="437.6" width="5.2" height="4.8" fill="#3a3a3a" />
<rect x="126.72" y="443.2" width="0.6" height="0.8" fill="#9a9a9a" />
<rect x="131.67" y="443.2" width="0.6" height="0.8" fill="#9a9a9a" />
<text x="131.97" y="441.4" font-size="3.0" fill="#cfcfcf" font-weight="normal" text-anchor="middle">14</text>
<rect x="134.33" y="437.6" width="5.2" height="4.8" fill="#3a3a3a" />
<rect x="136.62" y="443.2" width="0.6" height="0.8" fill="#9a9a9a" />
<rect x="141.58" y="443.2" width="0.6" height="0.8" fill="#9a9a9a" />
<text x="141.88" y="441.4" font-size="3.0" fill="#cfcfcf" font-weight="normal" text-anchor="middle">16</text>
<rect x="144.24" y="437.6" width="5.2" height="4.8" fill="#3a3a3a" />
<rect x="146.53" y="443.2" width="0.6" height="0.8" fill="#9a9a9a" />
<rect x="151.49" y="443.2" width="0.6" height="0.8" fill="#9a9a9a" />
<text x="151.79" y="441.4" font-size="3.0" fill="#cfcfcf" font-weight="normal" text-anchor="middle">18</text>
<rect x="154.15" y="437.6" width="5.2" height="4.8" fill="#3a3a3a" />
<rect x="156.44" y="443.2" width="0.6" height="0.8" fill="#9a9a9a" />
<rect x="161.4" y="443.2" width="0.6" height="0.8" fill="#9a9a9a" />
<text x="161.7" y="441.4" font-size="3.0" fill="#cfcfcf" font-weight="normal" text-anchor="middle">20</text>
<rect x="164.06" y="437.6" width="5.2" height="4.8" fill="#3a3a3a" />
<rect x="166.35" y="443.2" width="0.6" height="0.8" fill="#9a9a9a" />
<rect x="171.31" y="443.2" width="0.6" height="0.8" fill="#9a9a9a" />
<text x="171.61" y="441.4" font-size="3.0" fill="#cfcfcf" font-weight="normal" text-anchor="middle">22</text>
<rect x="173.97" y="437.6" width="5.2" height="4.8" fill="#3a3a3a" />
<rect x="176.26" y="443.2" width="0.6" height="0.8" fill="#9a9a9a" />
<rect x="181.22" y="443.2" width="0.6" height="0.8" fill="#9a9a9a" />
<text x="181.52" y="441.4" font-size="3.0" fill="#cfcfcf" font-weight="normal" text-anchor="middle">24</text>
<rect x="183.88" y="437.6" width="5.2" height="4.8" fill="#3a3a3a" />
<rect x="186.17" y="443.2" width="0.6" height="0.8" fill="#9a9a9a" />
<rect x="191.13" y="443.2" width="0.6" height="0.8" fill="#9a9a9a" />
<text x="191.43" y="441.4" font-size="3.0" fill="#cfcfcf" font-weight="normal" text-anchor="middle">26</text>
<rect x="193.78" y="437.6" width="5.2" height="4.8" fill="#3a3a3a" />
<rect x="196.08" y="443.2" width="0.6" height="0.8" fill="#9a9a9a" />
<rect x="201.04" y="443.2" width="0.6" height="0.8" fill="#9a9a9a" />
<text x="201.34" y="441.4" font-size="3.0" fill="#cfcfcf" font-weight="normal" text-anchor="middle">28</text>
<rect x="203.69" y="437.6" width="5.2" height="4.8" fill="#3a3a3a" />
<rect x="205.99" y="443.2" width="0.6" height="0.8" fill="#9a9a9a" />
<rect x="210.95" y="443.2" width="0.6" height="0.8" fill="#9a9a9a" />
<text x="211.25" y="441.4" font-size="3.0" fill="#cfcfcf" font-weight="normal" text-anchor="middle">30</text>
<rect x="213.6" y="437.6" width="5.2" height="4.8" fill="#3a3a3a" />
<rect x="215.9" y="443.2" width="0.6" height="0.8" fill="#9a9a9a" />
<rect x="220.86" y="443.2" width="0.6" height="0.8" fill="#9a9a9a" />
<text x="221.16" y="441.4" font-size="3.0" fill="#cfcfcf" font-weight="normal" text-anchor="middle">32</text>
<rect x="223.52" y="437.6" width="5.2" height="4.8" fill="#3a3a3a" />
<rect x="225.81" y="443.2" width="0.6" height="0.8" fill="#9a9a9a" />
<rect x="230.77" y="443.2" width="0.6" height="0.8" fill="#9a9a9a" />
<text x="231.07" y="441.4" font-size="3.0" fill="#cfcfcf" font-weight="normal" text-anchor="middle">34</text>
<rect x="233.43" y="437.6" width="5.2" height="4.8" fill="#3a3a3a" />
<rect x="235.72" y="443.2" width="0.6" height="0.8" fill="#9a9a9a" />
<rect x="240.68" y="443.2" width="0.6" height="0.8" fill="#9a9a9a" />
<text x="240.98" y="441.4" font-size="3.0" fill="#cfcfcf" font-weight="normal" text-anchor="middle">36</text>
<rect x="243.34" y="437.6" width="5.2" height="4.8" fill="#3a3a3a" />
<rect x="245.63" y="443.2" width="0.6" height="0.8" fill="#9a9a9a" />
<rect x="250.59" y="443.2" width="0.6" height="0.8" fill="#9a9a9a" />
<text x="250.89" y="441.4" font-size="3.0" fill="#cfcfcf" font-weight="normal" text-anchor="middle">38</text>
<rect x="253.25" y="437.6" width="5.2" height="4.8" fill="#3a3a3a" />
<rect x="255.54" y="443.2" width="0.6" height="0.8" fill="#9a9a9a" />
<rect x="260.5" y="443.2" width="0.6" height="0.8" fill="#9a9a9a" />
<text x="260.8" y="441.4" font-size="3.0" fill="#cfcfcf" font-weight="normal" text-anchor="middle">40</text>
<rect x="263.15" y="437.6" width="5.2" height="4.8" fill="#3a3a3a" />
<rect x="265.45" y="443.2" width="0.6" height="0.8" fill="#9a9a9a" />
<rect x="270.41" y="443.2" width="0.6" height="0.8" fill="#9a9a9a" />
<text x="270.71000000000004" y="441.4" font-size="3.0" fill="#cfcfcf" font-weight="normal" text-anchor="middle">42</text>
<rect x="273.06" y="437.6" width="5.2" height="4.8" fill="#3a3a3a" />
<rect x="275.37" y="443.2" width="0.6" height="0.8" fill="#9a9a9a" />
<rect x="280.32" y="443.2" width="0.6" height="0.8" fill="#9a9a9a" />
<text x="280.62" y="441.4" font-size="3.0" fill="#cfcfcf" font-weight="normal" text-anchor="middle">44</text>
<rect x="282.97" y="437.6" width="5.2" height="4.8" fill="#3a3a3a" />
<rect x="285.27" y="443.2" width="0.6" height="0.8" fill="#9a9a9a" />
<rect x="290.23" y="443.2" width="0.6" height="0.8" fill="#9a9a9a" />
<text x="290.53000000000003" y="441.4" font-size="3.0" fill="#cfcfcf" font-weight="normal" text-anchor="middle">46</text>
<rect x="292.88" y="437.6" width="5.2" height="4.8" fill="#3a3a3a" />
<rect x="295.19" y="443.2" width="0.6" height="0.8" fill="#9a9a9a" />
<rect x="300.14" y="443.2" width="0.6" height="0.8" fill="#9a9a9a" />
<text x="300.44" y="441.4" font-size="3.0" fill="#cfcfcf" font-weight="normal" text-anchor="middle">48</text>
<rect x="302.8" y="437.6" width="5.2" height="4.8" fill="#3a3a3a" />
<rect x="305.1" y="443.2" width="0.6" height="0.8" fill="#9a9a9a" />
<rect x="310.05" y="443.2" width="0.6" height="0.8" fill="#9a9a9a" />
<text x="310.35" y="441.4" font-size="3.0" fill="#cfcfcf" font-weight="normal" text-anchor="middle">50</text>
<rect x="312.7" y="437.6" width="5.2" height="4.8" fill="#3a3a3a" />
<rect x="315.0" y="443.2" width="0.6" height="0.8" fill="#9a9a9a" />
<rect x="319.96" y="443.2" width="0.6" height="0.8" fill="#9a9a9a" />
<text x="320.26000000000005" y="441.4" font-size="3.0" fill="#cfcfcf" font-weight="normal" text-anchor="middle">52</text>
<rect x="322.62" y="437.6" width="5.2" height="4.8" fill="#3a3a3a" />
<rect x="324.92" y="443.2" width="0.6" height="0.8" fill="#9a9a9a" />
<rect x="329.87" y="443.2" width="0.6" height="0.8" fill="#9a9a9a" />
<text x="330.17" y="441.4" font-size="3.0" fill="#cfcfcf" font-weight="normal" text-anchor="middle">54</text>
<rect x="332.52" y="437.6" width="5.2" height="4.8" fill="#3a3a3a" />
<rect x="334.82" y="443.2" width="0.6" height="0.8" fill="#9a9a9a" />
<rect x="339.78" y="443.2" width="0.6" height="0.8" fill="#9a9a9a" />
<text x="340.08000000000004" y="441.4" font-size="3.0" fill="#cfcfcf" font-weight="normal" text-anchor="middle">56</text>
<rect x="342.44" y="437.6" width="5.2" height="4.8" fill="#3a3a3a" />
<rect x="344.74" y="443.2" width="0.6" height="0.8" fill="#9a9a9a" />
<rect x="349.69" y="443.2" width="0.6" height="0.8" fill="#9a9a9a" />
<text x="349.99" y="441.4" font-size="3.0" fill="#cfcfcf" font-weight="normal" text-anchor="middle">58</text>
<rect x="352.35" y="437.6" width="5.2" height="4.8" fill="#3a3a3a" />
<rect x="354.65" y="443.2" width="0.6" height="0.8" fill="#9a9a9a" />
<rect x="359.6" y="443.2" width="0.6" height="0.8" fill="#9a9a9a" />
<text x="359.90000000000003" y="441.4" font-size="3.0" fill="#cfcfcf" font-weight="normal" text-anchor="middle">60</text>
<rect x="362.25" y="437.6" width="5.2" height="4.8" fill="#3a3a3a" />
<rect x="364.56" y="443.2" width="0.6" height="0.8" fill="#9a9a9a" />
<rect x="369.51" y="443.2" width="0.6" height="0.8" fill="#9a9a9a" />
<text x="369.81" y="441.4" font-size="3.0" fill="#cfcfcf" font-weight="normal" text-anchor="middle">62</text>
<rect x="372.17" y="437.6" width="5.2" height="4.8" fill="#3a3a3a" />
<rect x="374.47" y="443.2" width="0.6" height="0.8" fill="#9a9a9a" />
<rect x="379.42" y="443.2" width="0.6" height="0.8" fill="#9a9a9a" />
<text x="379.72" y="441.4" font-size="3.0" fill="#cfcfcf" font-weight="normal" text-anchor="middle">64</text>
<rect x="382.07" y="437.6" width="5.2" height="4.8" fill="#3a3a3a" />
<rect x="384.38" y="443.2" width="0.6" height="0.8" fill="#9a9a9a" />
<rect x="389.33" y="443.2" width="0.6" height="0.8" fill="#9a9a9a" />
<text x="389.63000000000005" y="441.4" font-size="3.0" fill="#cfcfcf" font-weight="normal" text-anchor="middle">66</text>
<rect x="391.99" y="437.6" width="5.2" height="4.8" fill="#3a3a3a" />
<rect x="394.29" y="443.2" width="0.6" height="0.8" fill="#9a9a9a" />
<rect x="399.24" y="443.2" width="0.6" height="0.8" fill="#9a9a9a" />
<text x="399.54" y="441.4" font-size="3.0" fill="#cfcfcf" font-weight="normal" text-anchor="middle">68</text>
<rect x="401.89" y="437.6" width="5.2" height="4.8" fill="#3a3a3a" />
<rect x="404.19" y="443.2" width="0.6" height="0.8" fill="#9a9a9a" />
<rect x="409.15" y="443.2" width="0.6" height="0.8" fill="#9a9a9a" />
<text x="409.45000000000005" y="441.4" font-size="3.0" fill="#cfcfcf" font-weight="normal" text-anchor="middle">70</text>
<rect x="411.81" y="437.6" width="5.2" height="4.8" fill="#3a3a3a" />
<rect x="414.11" y="443.2" width="0.6" height="0.8" fill="#9a9a9a" />
<rect x="419.06" y="443.2" width="0.6" height="0.8" fill="#9a9a9a" />
<text x="419.36" y="441.4" font-size="3.0" fill="#cfcfcf" font-weight="normal" text-anchor="middle">72</text>
<rect x="421.72" y="437.6" width="5.2" height="4.8" fill="#3a3a3a" />
<rect x="424.02" y="443.2" width="0.6" height="0.8" fill="#9a9a9a" />
<rect x="428.97" y="443.2" width="0.6" height="0.8" fill="#9a9a9a" />
<text x="429.27000000000004" y="441.4" font-size="3.0" fill="#cfcfcf" font-weight="normal" text-anchor="middle">74</text>
<rect x="431.62" y="437.6" width="5.2" height="4.8" fill="#3a3a3a" />
<rect x="433.93" y="443.2" width="0.6" height="0.8" fill="#9a9a9a" />
<rect x="438.88" y="443.2" width="0.6" height="0.8" fill="#9a9a9a" />
<text x="439.18" y="441.4" font-size="3.0" fill="#cfcfcf" font-weight="normal" text-anchor="middle">76</text>
<rect x="441.54" y="437.6" width="5.2" height="4.8" fill="#3a3a3a" />
<rect x="443.84" y="443.2" width="0.6" height="0.8" fill="#9a9a9a" />
<rect x="448.79" y="443.2" width="0.6" height="0.8" fill="#9a9a9a" />
<text x="449.09000000000003" y="441.4" font-size="3.0" fill="#cfcfcf" font-weight="normal" text-anchor="middle">78</text>
<rect x="451.44" y="437.6" width="5.2" height="4.8" fill="#3a3a3a" />
<rect x="453.75" y="443.2" width="0.6" height="0.8" fill="#9a9a9a" />
<rect x="458.7" y="443.2" width="0.6" height="0.8" fill="#9a9a9a" />
<text x="459.0" y="441.4" font-size="3.0" fill="#cfcfcf" font-weight="normal" text-anchor="middle">80</text>
<rect x="461.36" y="437.6" width="5.2" height="4.8" fill="#3a3a3a" />
<rect x="463.66" y="443.2" width="0.6" height="0.8" fill="#9a9a9a" />
<rect x="468.61" y="443.2" width="0.6" height="0.8" fill="#9a9a9a" />
<text x="468.91" y="441.4" font-size="3.0" fill="#cfcfcf" font-weight="normal" text-anchor="middle">82</text>
<rect x="471.26" y="437.6" width="5.2" height="4.8" fill="#3a3a3a" />
<rect x="473.56" y="443.2" width="0.6" height="0.8" fill="#9a9a9a" />
<rect x="478.52" y="443.2" width="0.6" height="0.8" fill="#9a9a9a" />
<text x="478.82000000000005" y="441.4" font-size="3.0" fill="#cfcfcf" font-weight="normal" text-anchor="middle">84</text>
<rect x="481.18" y="437.6" width="5.2" height="4.8" fill="#3a3a3a" />
<rect x="483.48" y="443.2" width="0.6" height="0.8" fill="#9a9a9a" />
<rect x="488.43" y="443.2" width="0.6" height="0.8" fill="#9a9a9a" />
<text x="488.73" y="441.4" font-size="3.0" fill="#cfcfcf" font-weight="normal" text-anchor="middle">86</text>
<rect x="491.08" y="437.6" width="5.2" height="4.8" fill="#3a3a3a" />
<rect x="493.38" y="443.2" width="0.6" height="0.8" fill="#9a9a9a" />
<rect x="498.34" y="443.2" width="0.6" height="0.8" fill="#9a9a9a" />
<text x="498.64000000000004" y="441.4" font-size="3.0" fill="#cfcfcf" font-weight="normal" text-anchor="middle">88</text>
<rect x="501.0" y="437.6" width="5.2" height="4.8" fill="#3a3a3a" />
<rect x="503.3" y="443.2" width="0.6" height="0.8" fill="#9a9a9a" />
<rect x="508.25" y="443.2" width="0.6" height="0.8" fill="#9a9a9a" />
<text x="508.55" y="441.4" font-size="3.0" fill="#cfcfcf" font-weight="normal" text-anchor="middle">90</text>
<rect x="60" y="438" width="2.7" height="4.4" fill="#41e06a" />
<rect x="512" y="439.2" width="18" height="4" fill="#2f2f2f" />
<text x="513.5" y="442.3" font-size="3.0" fill="#bbb" font-weight="normal" >0 F</text>
<path d="M528.2 440.3v2l0.9-1z" fill="#999" stroke="none" stroke-width="0.6" />
<rect x="57" y="445" width="473" height="9" fill="#474747" />
<rect x="59" y="446.3" width="18.5" height="6.4" fill="#3a3a3a" />
<text x="60.5" y="450.6" font-size="3.0" fill="#c0c0c0" font-weight="normal" >0 F</text>
<path d="M75.6 448.5v2l1-1z" fill="#999" stroke="none" stroke-width="0.6" />
<rect x="80" y="446.7" width="288.5" height="4.4" fill="#777777" />
<rect x="80" y="446.7" width="8.5" height="4.4" fill="#8c8c8c" />
<text x="81" y="450.6" font-size="2.9" fill="#dedede" font-weight="normal" >0 F</text>
<rect x="361" y="446.7" width="7.5" height="4.4" fill="#8c8c8c" />
<text x="361.5" y="450.6" font-size="2.6" fill="#dedede" font-weight="normal" >90 F</text>
<rect x="371" y="446.3" width="18.5" height="6.4" fill="#3a3a3a" />
<text x="372.5" y="450.6" font-size="3.0" fill="#c0c0c0" font-weight="normal" >90 F</text>
<path d="M387.6 448.5v2l1-1z" fill="#999" stroke="none" stroke-width="0.6" />
<rect x="392.5" y="446.2" width="7.5" height="6.6" fill="#5a5a5a" />
<path d="M394.2 447.8v3.4M398.7 447.8l-3.4 1.7l3.4 1.7z" fill="#111" stroke="#111" stroke-width="0.6" />
<rect x="403" y="446.2" width="40" height="6.6" fill="#5a5a5a" />
<path d="M409.5 447.6a2 2 0 1 0 0 3.8" fill="none" stroke="#111" stroke-width="1.0" />
<path d="M416 447.8l-3 1.7l3 1.7" fill="none" stroke="#222" stroke-width="0.6" />
<path d="M420 447.5l4.5 2l-4.5 2z" fill="#35d45b" stroke="none" stroke-width="0.6" />
<path d="M428.5 447.8l3 1.7l-3 1.7z" fill="#111" stroke="none" stroke-width="0.6" />
<path d="M437.5 447.6a2 2 0 1 1 0 3.8" fill="none" stroke="#111" stroke-width="1.0" />
<rect x="444.7" y="446.2" width="7" height="6.6" fill="#5a5a5a" />
<path d="M450 447.8v3.4M445.8 447.8l3.4 1.7l-3.4 1.7z" fill="#111" stroke="#111" stroke-width="0.6" />
<rect x="455.4" y="446.2" width="22.5" height="6.6" fill="#5c5c5c" />
<circle cx="459.5" cy="449.5" r="2.7" fill="#dc3030" stroke="none" stroke-width="0.6" />
<path d="M457.9 450.8l3.2-2.6" fill="none" stroke="#f4a0a0" stroke-width="0.5" />
<circle cx="466.7" cy="449.5" r="2.7" fill="#dc3030" stroke="none" stroke-width="0.6" />
<path d="M465.09999999999997 450.8l3.2-2.6" fill="none" stroke="#f4a0a0" stroke-width="0.5" />
<circle cx="473.9" cy="449.5" r="2.7" fill="#dc3030" stroke="none" stroke-width="0.6" />
<path d="M472.29999999999995 450.8l3.2-2.6" fill="none" stroke="#f4a0a0" stroke-width="0.5" />
<rect x="481" y="446" width="31" height="7" fill="#a9c1e0" />
<path d="M485.6 451.7v-3.6M484 449.6l1.6-2l1.6 2" fill="none" stroke="#e8801a" stroke-width="0.9" />
<rect x="490.8" y="447.8" width="3.8" height="3.6" fill="#ee8a1a" />
<circle cx="500" cy="449.6" r="2.2" fill="none" stroke="#e8801a" stroke-width="0.9" />
<circle cx="507.8" cy="449.6" r="2.6" fill="#4a4a4a" stroke="#556" stroke-width="0.5" />
<path d="M507 448.5v2.5M507 448.5h1.3v1.2h-1.3" fill="none" stroke="#ddd" stroke-width="0.5" />
<rect x="513" y="446.8" width="8" height="5.8" fill="#5a5a5a" />
<path d="M514 448h6M514 449.7h6M514 451.4h6" fill="none" stroke="#9b7a5a" stroke-width="0.7" />
<rect x="522" y="446" width="8.4" height="7" fill="#a9c1e0" />
<rect x="525.3" y="446.8" width="1.9" height="5.4" fill="#ee8a1a" />
<path d="M526.25 447.3v4.6" fill="none" stroke="#6a4a2a" stroke-width="0.4" stroke-dasharray="0.6 0.6"/>
<rect x="57" y="454" width="359" height="32" fill="#494949" />
<rect x="57" y="454" width="359" height="7" fill="#474747" />
<rect x="57" y="460.5" width="359" height="0.5" fill="#3c3c3c" />
<rect x="59" y="456.2" width="2.6" height="2.6" fill="#5a5a5a" />
<text x="64" y="459.4" font-size="3.1" fill="#e4e3c6" font-weight="bold" >Create</text>
<text x="77" y="459.4" font-size="3.1" fill="#e4e3c6" font-weight="bold" >Edit</text>
<text x="86" y="459.4" font-size="3.1" fill="#a0a0a0" font-weight="normal" >Function</text>
<text x="103" y="459.4" font-size="3.1" fill="#d6d6d6" font-weight="bold" >Texture</text>
<rect x="416" y="454" width="114" height="32" fill="#494949" />
<rect x="416" y="454" width="0.8" height="32" fill="#3a3a3a" />
<rect x="418.6" y="456.2" width="2.4" height="2.4" fill="#5a5a5a" />
<text x="423" y="459.2" font-size="3.1" fill="#b9b9b9" font-weight="normal" >Position</text>
<text x="459" y="459.2" font-size="3.1" fill="#b9b9b9" font-weight="normal" >Size</text>
<text x="495" y="459.2" font-size="3.1" fill="#b9b9b9" font-weight="normal" >Rotation</text>
<rect x="417" y="460.3" width="113" height="0.5" fill="#3a3a3a" />
<text x="417.8" y="465.1" font-size="2.8" fill="#aaa" font-weight="normal" >X</text>
<rect x="421" y="462.0" width="32.5" height="3.9" fill="#363636" />
<text x="422" y="465.1" font-size="2.8" fill="#c8c8c8" font-weight="normal" >0 cm</text>
<path d="M452 463.2v1.6l0.8-0.8z" fill="#999" stroke="none" stroke-width="0.6" />
<text x="455.3" y="465.1" font-size="2.8" fill="#aaa" font-weight="normal" >X</text>
<rect x="459" y="462.0" width="32.5" height="3.9" fill="#363636" />
<text x="460" y="465.1" font-size="2.8" fill="#c8c8c8" font-weight="normal" >400 cm</text>
<path d="M490 463.2v1.6l0.8-0.8z" fill="#999" stroke="none" stroke-width="0.6" />
<text x="492.3" y="465.1" font-size="2.8" fill="#aaa" font-weight="normal" >H</text>
<rect x="496" y="462.0" width="32.5" height="3.9" fill="#363636" />
<text x="497" y="465.1" font-size="2.8" fill="#c8c8c8" font-weight="normal" >0 °</text>
<path d="M527 463.2v1.6l0.8-0.8z" fill="#999" stroke="none" stroke-width="0.6" />
<text x="417.8" y="470.70000000000005" font-size="2.8" fill="#aaa" font-weight="normal" >Y</text>
<rect x="421" y="467.6" width="32.5" height="3.9" fill="#363636" />
<text x="422" y="470.70000000000005" font-size="2.8" fill="#c8c8c8" font-weight="normal" >0 cm</text>
<path d="M452 468.8v1.6l0.8-0.8z" fill="#999" stroke="none" stroke-width="0.6" />
<text x="455.3" y="470.70000000000005" font-size="2.8" fill="#aaa" font-weight="normal" >Y</text>
<rect x="459" y="467.6" width="32.5" height="3.9" fill="#363636" />
<text x="460" y="470.70000000000005" font-size="2.8" fill="#c8c8c8" font-weight="normal" >400 cm</text>
<path d="M490 468.8v1.6l0.8-0.8z" fill="#999" stroke="none" stroke-width="0.6" />
<text x="492.3" y="470.70000000000005" font-size="2.8" fill="#aaa" font-weight="normal" >P</text>
<rect x="496" y="467.6" width="32.5" height="3.9" fill="#363636" />
<text x="497" y="470.70000000000005" font-size="2.8" fill="#c8c8c8" font-weight="normal" >0 °</text>
<path d="M527 468.8v1.6l0.8-0.8z" fill="#999" stroke="none" stroke-width="0.6" />
<text x="417.8" y="476.3" font-size="2.8" fill="#aaa" font-weight="normal" >Z</text>
<rect x="421" y="473.2" width="32.5" height="3.9" fill="#363636" />
<text x="422" y="476.3" font-size="2.8" fill="#c8c8c8" font-weight="normal" >0 cm</text>
<path d="M452 474.4v1.6l0.8-0.8z" fill="#999" stroke="none" stroke-width="0.6" />
<text x="455.3" y="476.3" font-size="2.8" fill="#aaa" font-weight="normal" >Z</text>
<rect x="459" y="473.2" width="32.5" height="3.9" fill="#363636" />
<text x="460" y="476.3" font-size="2.8" fill="#c8c8c8" font-weight="normal" >400 cm</text>
<path d="M490 474.4v1.6l0.8-0.8z" fill="#999" stroke="none" stroke-width="0.6" />
<text x="492.3" y="476.3" font-size="2.8" fill="#aaa" font-weight="normal" >B</text>
<rect x="496" y="473.2" width="32.5" height="3.9" fill="#363636" />
<text x="497" y="476.3" font-size="2.8" fill="#c8c8c8" font-weight="normal" >0 °</text>
<path d="M527 474.4v1.6l0.8-0.8z" fill="#999" stroke="none" stroke-width="0.6" />
<rect x="420" y="479.3" width="33.5" height="4.6" fill="#5e5e5e" rx="1"/>
<text x="421.5" y="482.6" font-size="2.9" fill="#d0d0d0" font-weight="normal" >Object (Rel)</text>
<path d="M450.3 481h1.8l-0.9 1z" fill="#ddd" stroke="none" stroke-width="0.6" />
<rect x="458" y="479.3" width="33.5" height="4.6" fill="#5e5e5e" rx="1"/>
<text x="459.5" y="482.6" font-size="2.9" fill="#d0d0d0" font-weight="normal" >Size</text>
<path d="M488.3 481h1.8l-0.9 1z" fill="#ddd" stroke="none" stroke-width="0.6" />
<rect x="495" y="479.3" width="34.5" height="4.6" fill="#5e5e5e" rx="2.2"/>
<text x="512.2" y="482.6" font-size="2.9" fill="#d8d8d8" font-weight="normal" text-anchor="middle">Apply</text>
<rect x="416" y="485.5" width="114" height="0.6" fill="#3a3a3a" />
<rect x="46" y="485.6" width="484" height="3.4" fill="#474747" />
<rect x="57" y="485.3" width="473" height="0.5" fill="#565656" />
<rect x="47" y="486.6" width="2.2" height="2.2" fill="#666" />
<text x="51" y="489.3" font-size="3.2" fill="#c4c4c4" font-weight="normal" textLength="192" lengthAdjust="spacingAndGlyphs">Move: Click and drag to move elements. Hold down SHIFT to quantize movement / add to the selection in point mode, CTRL to remove.</text>
<rect x="530" y="114.5" width="224" height="374.5" fill="#404040" />
<rect x="530" y="126" width="1" height="360" fill="#9a9a9a" opacity="0"/>
<rect x="531.3" y="115.4" width="218.2" height="183" fill="#4a4a4a" />
<rect x="531.3" y="115.4" width="218.2" height="6.1" fill="#474747" />
<path d="M533.2 117.5h2.4M533.2 118.6h2.4M533.2 119.7h2.4" fill="none" stroke="#777" stroke-width="0.4" />
<text x="538" y="120.2" font-size="3.1" fill="#e4e3c6" font-weight="bold" >File</text>
<text x="547.5" y="120.2" font-size="3.1" fill="#a0a0a0" font-weight="normal" >Edit</text>
<text x="557" y="120.2" font-size="3.1" fill="#a0a0a0" font-weight="normal" >View</text>
<text x="568" y="120.2" font-size="3.1" fill="#e4e3c6" font-weight="bold" >Objects</text>
<text x="582" y="120.2" font-size="3.1" fill="#e4e3c6" font-weight="bold" >Tags</text>
<text x="593" y="120.2" font-size="3.1" fill="#a0a0a0" font-weight="normal" >Bookmarks</text>
<circle cx="731.6" cy="117.9" r="1.2" fill="none" stroke="#1a1a1a" stroke-width="0.55" />
<path d="M730.8 118.9l-1 1.4" fill="none" stroke="#1a1a1a" stroke-width="0.7" />
<path d="M735.2 119.2l2.1-2l2.1 2h-0.6v1.8h-3v-1.8z" fill="#151515" stroke="none" stroke-width="0.6" />
<rect x="740.5" y="118.6" width="2.4" height="0.5" fill="#666" />
<rect x="745" y="117" width="2.8" height="3.2" fill="none" stroke="#222" stroke-width="0.5"/>
<rect x="531.3" y="121.5" width="218.2" height="6.2" fill="#4b4b4b" />
<rect x="531.3" y="127.6" width="218.2" height="0.4" fill="#3e3e3e" />
<path d="M534 122.3v3h1.8" fill="none" stroke="#777" stroke-width="0.4" />
<circle cx="538.2" cy="125.2" r="2.1" fill="#5aa7ea" stroke="none" stroke-width="0.6" />
<circle cx="537.6" cy="124.6" r="0.8" fill="#c9e4fa" stroke="none" stroke-width="0.6" />
<rect x="541.2" y="122.7" width="11.5" height="4.3" fill="#5b5640" />
<text x="541.6" y="126.0" font-size="3.1" fill="#e9c24a" font-weight="normal" >Sphere</text>
<rect x="554.6" y="123.1" width="3.2" height="3.2" fill="#5a5a5a" stroke="#888" stroke-width="0.3"/>
<circle cx="556.2" cy="124.7" r="0.9" fill="#999" stroke="none" stroke-width="0.6" />
<path d="M559.5 124.8l1 1.3l2-2.8" fill="none" stroke="#4cc270" stroke-width="0.7" />
<circle cx="565.8" cy="123.4" r="0.9" fill="#e2a060" stroke="none" stroke-width="0.6" />
<circle cx="567.2" cy="125.6" r="1.1" fill="#d24a1c" stroke="none" stroke-width="0.6" />
<rect x="553.5" y="127.8" width="0.5" height="170.5" fill="#3d3d3d" />
<rect x="564.3" y="121.5" width="0.5" height="177" fill="#3d3d3d" />
<rect x="531.3" y="115.4" width="218.2" height="183" fill="none" stroke="#585858" stroke-width="0.5"/>
<rect x="531.3" y="298.5" width="217.5" height="190.5" fill="#494949" />
<rect x="531.3" y="298.5" width="217.5" height="6" fill="#474747" />
<rect x="531.3" y="298.2" width="217.5" height="0.5" fill="#3a3a3a" />
<path d="M533.2 300.5h2.4M533.2 301.6h2.4M533.2 302.7h2.4" fill="none" stroke="#777" stroke-width="0.4" />
<text x="539" y="303.2" font-size="3.1" fill="#b9b9b9" font-weight="normal" >Mode</text>
<text x="551" y="303.2" font-size="3.1" fill="#b9b9b9" font-weight="normal" >Edit</text>
<text x="560" y="303.2" font-size="3.1" fill="#b9b9b9" font-weight="normal" >User Data</text>
<path d="M713 299.8v3.2l-3-1.6z" fill="#111" stroke="none" stroke-width="0.6" />
<path d="M715.5 302.8l3-2.8" fill="none" stroke="#5e5e5e" stroke-width="0.5" />
<path d="M723.5 299.6l1.6 3.3h-3.2z" fill="#111" stroke="none" stroke-width="0.6" />
<path d="M729.5 300l2.5 2.5M729.5 300v1.6M729.5 300h1.6" fill="none" stroke="#333" stroke-width="0.5" />
<circle cx="736.3" cy="301.2" r="1.2" fill="none" stroke="#333" stroke-width="0.5" />
<circle cx="741.9" cy="301.4" r="1.6" fill="#333" stroke="none" stroke-width="0.6" />
<rect x="745.3" y="299.7" width="2.9" height="3.1" fill="none" stroke="#333" stroke-width="0.5"/>
<circle cx="535.3" cy="308.8" r="2.6" fill="#5aa7ea" stroke="none" stroke-width="0.6" />
<circle cx="534.6" cy="308.0" r="1.0" fill="#cde6fb" stroke="none" stroke-width="0.6" />
<text x="539.4" y="310.1" font-size="3.1" fill="#c8c8c8" font-weight="normal" >Sphere Object [Sphere]</text>
<rect x="532.5" y="312.6" width="11.5" height="5.3" fill="#5d5d5d" />
<text x="533.5" y="316.2" font-size="3.0" fill="#c0c0c0" font-weight="normal" >Basic</text>
<rect x="544.3" y="312.6" width="11.7" height="5.3" fill="#5d5d5d" />
<text x="545.3" y="316.2" font-size="3.0" fill="#c0c0c0" font-weight="normal" >Coord.</text>
<rect x="556.3" y="312.6" width="11.8" height="5.3" fill="#7f9bc8" />
<text x="557.2" y="316.2" font-size="3.0" fill="#e8eef8" font-weight="normal" >Object</text>
<rect x="568.3" y="312.6" width="11.8" height="5.3" fill="#5d5d5d" />
<text x="569.2" y="316.2" font-size="3.0" fill="#c0c0c0" font-weight="normal" >Phong</text>
<rect x="531.3" y="318.3" width="217.5" height="4.3" fill="#3a3a3a" />
<text x="532.6" y="321.7" font-size="3.0" fill="#b8b8b8" font-weight="bold" >Object Properties</text>
<circle cx="534.2" cy="326.8" r="1.3" fill="#444" stroke="#7a7a7a" stroke-width="0.45" />
<circle cx="534.2" cy="326.8" r="0.5" fill="#8a8a8a" stroke="none" stroke-width="0.6" />
<text x="539" y="327.7" font-size="3.1" fill="#bcbcbc" font-weight="normal" >Radius</text>
<path d="M551.5 327.6h8.5" fill="none" stroke="#858585" stroke-width="0.35" stroke-dasharray="0.45 0.55"/>
<rect x="561" y="324.90000000000003" width="19.6" height="4.2" fill="#333" />
<text x="562.3" y="327.90000000000003" font-size="3.0" fill="#d0d0d0" font-weight="normal" >200 cm</text>
<path d="M578.6 326.1v1.8l0.9-0.9z" fill="#aaa" stroke="none" stroke-width="0.6" />
<circle cx="534.2" cy="332.35" r="1.3" fill="#444" stroke="#7a7a7a" stroke-width="0.45" />
<circle cx="534.2" cy="332.35" r="0.5" fill="#8a8a8a" stroke="none" stroke-width="0.6" />
<text x="539" y="333.25" font-size="3.1" fill="#bcbcbc" font-weight="normal" >Segments</text>
<path d="M551.5 333.15000000000003h8.5" fill="none" stroke="#858585" stroke-width="0.35" stroke-dasharray="0.45 0.55"/>
<rect x="561" y="330.45000000000005" width="19.6" height="4.2" fill="#333" />
<text x="562.3" y="333.45000000000005" font-size="3.0" fill="#d0d0d0" font-weight="normal" >24</text>
<path d="M578.6 331.65000000000003v1.8l0.9-0.9z" fill="#aaa" stroke="none" stroke-width="0.6" />
<circle cx="534.2" cy="337.90000000000003" r="1.3" fill="#444" stroke="#7a7a7a" stroke-width="0.45" />
<circle cx="534.2" cy="337.90000000000003" r="0.5" fill="#8a8a8a" stroke="none" stroke-width="0.6" />
<text x="539" y="338.8" font-size="3.1" fill="#bcbcbc" font-weight="normal" >Type</text>
<path d="M551.5 338.70000000000005h8.5" fill="none" stroke="#858585" stroke-width="0.35" stroke-dasharray="0.45 0.55"/>
<rect x="561" y="336.1" width="187" height="4" fill="#626262" />
<text x="562.3" y="339.00000000000006" font-size="3.0" fill="#d5d5d5" font-weight="normal" >Standard</text>
<path d="M745 337.40000000000003h2l-1 1.2z" fill="#ddd" stroke="none" stroke-width="0.6" />
<circle cx="534.2" cy="343.45" r="1.3" fill="#444" stroke="#7a7a7a" stroke-width="0.45" />
<circle cx="534.2" cy="343.45" r="0.5" fill="#8a8a8a" stroke="none" stroke-width="0.6" />
<text x="539" y="344.34999999999997" font-size="3.1" fill="#bcbcbc" font-weight="normal" >Render Perfect</text>
<path d="M551.5 344.25h8.5" fill="none" stroke="#858585" stroke-width="0.35" stroke-dasharray="0.45 0.55"/>
<path d="M561.3 343.45l1 1.2l2-2.4" fill="none" stroke="#ddd" stroke-width="0.6" />
<rect x="749.5" y="114.5" width="4.5" height="374.5" fill="#474747" />
<rect x="749.5" y="114.5" width="0.5" height="374.5" fill="#3c3c3c" />
<rect x="750" y="115.3" width="3.8" height="15" fill="#7a7a7a" />
<rect x="750.2" y="117.6" width="3.4" height="10.6" fill="#a88f64" />
<rect x="750" y="130.6" width="3.8" height="52.4" fill="#343434" />
<rect x="751.4" y="132" width="0.9" height="14" fill="#5e5e5e" />
<rect x="751.4" y="149" width="0.9" height="20" fill="#5e5e5e" />
<rect x="751.4" y="172" width="0.9" height="9.5" fill="#5e5e5e" />
<rect x="750" y="147.6" width="3.8" height="0.5" fill="#4a4a4a" />
<rect x="750" y="170.6" width="3.8" height="0.5" fill="#4a4a4a" />
<rect x="750" y="298.6" width="3.8" height="15.5" fill="#7a7a7a" />
<rect x="750.2" y="300.6" width="3.4" height="11.6" fill="#a88f64" />
<rect x="750" y="315.2" width="3.8" height="13" fill="#343434" />
<rect x="751.4" y="317" width="0.9" height="9.5" fill="#5e5e5e" />
<rect x="753.5" y="109" width="0.5" height="380" fill="#3a3a3a" />
</svg>
</body></html>
